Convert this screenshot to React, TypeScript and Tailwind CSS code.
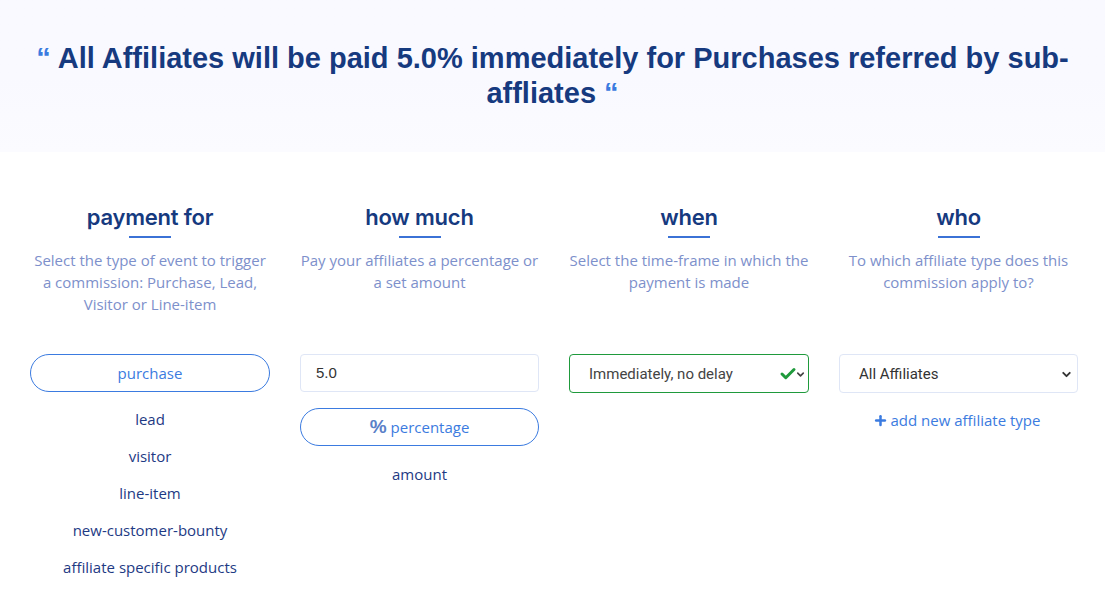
import { Check, ChevronDown, Plus } from 'lucide-react'

const columns = [
  {
    title: 'payment for',
    text: 'Select the type of event to trigger a commission: Purchase, Lead, Visitor or Line-item',
  },
  { title: 'how much', text: 'Pay your affiliates a percentage or a set amount' },
  { title: 'when', text: 'Select the time-frame in which the payment is made' },
  { title: 'who', text: 'To which affiliate type does this commission apply to?' },
]

const events = ['lead', 'visitor', 'line-item', 'new-customer-bounty', 'affiliate specific products']

function Heading({ title, text }: { title: string; text: string }) {
  return (
    <div className="flex flex-col items-center text-center">
      <h2 className="text-[22px] font-semibold leading-[30px] text-[#163a7f] font-['Inter',sans-serif] tracking-[-0.2px]">
        {title}
      </h2>
      <div className="mt-[4px] h-[2px] w-[42px] bg-[#3b72d6]" />
      <p className="mt-[11px] text-[15px] leading-[22px] text-[#7d90cb] font-['Open_Sans',sans-serif]">
        {text}
      </p>
    </div>
  )
}

export default function App() {
  return (
    <div className="min-h-[604px] bg-white font-['Open_Sans',sans-serif]">
      <div className="h-[152px] bg-gradient-to-b from-[#f9f9ff] via-[#f9f9ff] to-[#fbfbff] flex items-center justify-center px-[30px]">
        <h1 className="text-center text-[29px] font-bold leading-[35px] text-[#163a7f] font-['Liberation_Sans',Arial,sans-serif]">
          <span className="text-[#3b7be0]">“</span> All Affiliates will be paid 5.0% immediately for Purchases referred by sub-
          affliates <span className="text-[#3b7be0]">“</span>
        </h1>
      </div>

      <div className="grid grid-cols-[240px_239px_240px_239px] gap-x-[30px] pl-[30px] pt-[50px]">
        {columns.map(c => (
          <Heading key={c.title} title={c.title} text={c.text} />
        ))}
      </div>

      <div className="grid grid-cols-[240px_239px_240px_239px] gap-x-[30px] pl-[30px] mt-[39px] items-start">
        {/* payment for */}
        <div className="flex flex-col items-center">
          <button className="h-[38px] w-full rounded-full border border-[#3b7be0] text-[15px] text-[#3b7be0]">
            purchase
          </button>
          <div className="mt-[9px] flex flex-col items-center">
            {events.map(e => (
              <div key={e} className="h-[37px] flex items-center text-[15px] text-[#1e3a84]">
                {e}
              </div>
            ))}
          </div>
        </div>

        {/* how much */}
        <div className="flex flex-col items-center">
          <div className="h-[38px] w-full rounded-[4px] border border-[#dfe6f6] flex items-center pl-[15px] text-[15px] text-[#333] font-['Liberation_Sans',Arial,sans-serif]">
            5.0
          </div>
          <button className="mt-[16px] h-[38px] w-full rounded-full border border-[#3b7be0] text-[15px] text-[#3b7be0] flex items-center justify-center gap-[4px]">
            <span className="text-[19px] font-bold text-[#5a80c8] font-['Liberation_Sans',Arial,sans-serif]">%</span>
            percentage
          </button>
          <div className="mt-[17px] text-[15px] text-[#1e3a84]">amount</div>
        </div>

        {/* when */}
        <div className="h-[39px] w-full rounded-[4px] border border-[#1f9a3c] flex items-center pl-[19px] pr-[2px] pt-[1px] text-[15px] text-[#444] font-['Roboto',sans-serif]">
          <span className="flex-1">Immediately, no delay</span>
          <Check size={18} strokeWidth={4} className="text-[#1f9a3c] -mr-[2px]" />
          <ChevronDown size={11} strokeWidth={3.5} className="text-[#444]" />
        </div>

        {/* who */}
        <div className="flex flex-col items-center">
          <div className="h-[39px] w-full rounded-[4px] border border-[#dfe6f6] flex items-center pl-[19px] pr-[4px] pt-[1px] text-[15px] text-[#333] font-['Roboto',sans-serif]">
            <span className="flex-1">All Affiliates</span>
            <ChevronDown size={13} strokeWidth={3.5} className="text-[#333]" />
          </div>
          <div className="mt-[16px] flex items-center gap-[3px] text-[15px] text-[#3b7be0] -ml-[4px]">
            <Plus size={15} strokeWidth={4} />
            add new affiliate type
          </div>
        </div>
      </div>
    </div>
  )
}
